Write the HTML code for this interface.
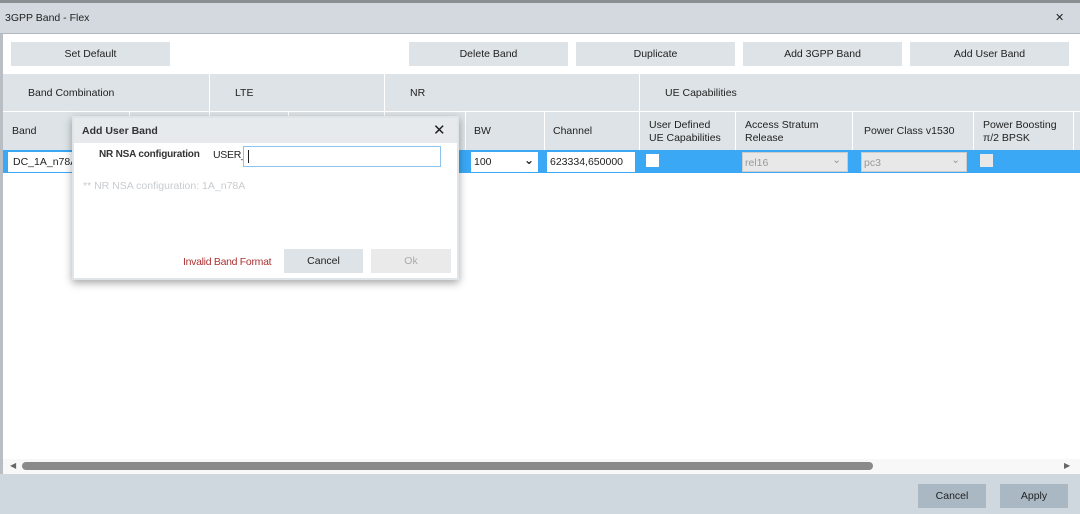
<!DOCTYPE html>
<html><head><meta charset="utf-8"><style>
*{box-sizing:border-box;margin:0;padding:0}
body{width:1080px;height:514px;overflow:hidden;background:#fff;font-family:"Liberation Sans","DejaVu Sans",sans-serif;font-size:10.5px;color:#222;position:relative}
.a{position:absolute}
.btn{position:absolute;background:#dde3e7;text-align:center;line-height:24px;font-size:10.5px;color:#222}
.vl{position:absolute;width:1px;background:#fff}
</style></head><body>
<div class="a" style="left:0;top:0;width:1080px;height:3px;background:#8a8f94"></div>
<div class="a" style="left:0;top:3px;width:1080px;height:31px;background:#d3d9de;border-bottom:1px solid #b0b8bf"></div>
<div class="a" style="left:5px;top:12px">3GPP Band - Flex</div>
<div class="a" style="left:1055px;top:11px;font-size:11px;font-weight:bold">✕</div>
<div class="a" style="left:0;top:34px;width:3px;height:440px;background:#b8bec4"></div>
<div class="btn" style="left:11px;top:42px;width:159px">Set Default</div>
<div class="btn" style="left:409px;top:42px;width:159px">Delete Band</div>
<div class="btn" style="left:576px;top:42px;width:159px">Duplicate</div>
<div class="btn" style="left:743px;top:42px;width:159px">Add 3GPP Band</div>
<div class="btn" style="left:910px;top:42px;width:159px">Add User Band</div>
<div class="a" style="left:3px;top:74px;width:1077px;height:76px;background:#dde3e7"></div>
<div class="a" style="left:3px;top:111px;width:1077px;height:1px;background:#fff"></div>
<div class="vl" style="left:209px;top:74px;height:76px"></div>
<div class="vl" style="left:384px;top:74px;height:76px"></div>
<div class="vl" style="left:639px;top:74px;height:76px"></div>
<div class="vl" style="left:129px;top:111px;height:39px"></div>
<div class="vl" style="left:288px;top:111px;height:39px"></div>
<div class="vl" style="left:465px;top:111px;height:39px"></div>
<div class="vl" style="left:544px;top:111px;height:39px"></div>
<div class="vl" style="left:735px;top:111px;height:39px"></div>
<div class="vl" style="left:852px;top:111px;height:39px"></div>
<div class="vl" style="left:973px;top:111px;height:39px"></div>
<div class="vl" style="left:1073px;top:111px;height:39px"></div>
<div class="a" style="left:28px;top:87px">Band Combination</div>
<div class="a" style="left:235px;top:87px">LTE</div>
<div class="a" style="left:410px;top:87px">NR</div>
<div class="a" style="left:665px;top:87px">UE Capabilities</div>
<div class="a" style="left:12px;top:125px">Band</div>
<div class="a" style="left:474px;top:125px">BW</div>
<div class="a" style="left:553px;top:125px">Channel</div>
<div class="a" style="left:649px;top:119px;line-height:13px">User Defined<br>UE Capabilities</div>
<div class="a" style="left:745px;top:119px;line-height:13px">Access Stratum<br>Release</div>
<div class="a" style="left:864px;top:125px">Power Class v1530</div>
<div class="a" style="left:983px;top:119px;line-height:13px">Power Boosting<br>π/2 BPSK</div>
<div class="a" style="left:3px;top:150px;width:1077px;height:23px;background:#3aa8f5"></div>
<div class="a" style="left:8px;top:152px;width:120px;height:20px;background:#fff;padding:4px 5px">DC_1A_n78A</div>
<div class="a" style="left:471px;top:152px;width:67px;height:20px;background:#fff;padding:4px 3px">100<span style="position:absolute;right:4px;top:1px;font-weight:bold;font-size:12px">⌄</span></div>
<div class="a" style="left:547px;top:152px;width:88px;height:20px;background:#fff;padding:4px 3px">623334,650000</div>
<div class="a" style="left:646px;top:154px;width:13px;height:13px;background:#fff"></div>
<div class="a" style="left:742px;top:152px;width:106px;height:20px;background:#e8e8e8;border:1px solid #ccc;padding:4px 2px;color:#999">rel16<span style="position:absolute;right:6px;top:1px">⌄</span></div>
<div class="a" style="left:861px;top:152px;width:106px;height:20px;background:#e8e8e8;border:1px solid #ccc;padding:4px 2px;color:#999">pc3<span style="position:absolute;right:6px;top:1px">⌄</span></div>
<div class="a" style="left:980px;top:154px;width:13px;height:13px;background:#e8e8e8"></div>
<!-- dialog -->
<div class="a" style="left:72px;top:116px;width:387px;height:164px;background:#fff;border:2px solid #dfe4e8;box-shadow:0 3px 8px rgba(0,0,0,.35)"></div>
<div class="a" style="left:74px;top:118px;width:383px;height:25px;background:#e6eaed"></div>
<div class="a" style="left:82px;top:125px;font-weight:bold;color:#333">Add User Band</div>
<div class="a" style="left:433px;top:121px;font-size:15px;font-weight:bold">✕</div>
<div class="a" style="left:99px;top:149px;font-weight:bold;color:#333;font-size:10px;letter-spacing:-0.2px">NR NSA configuration</div>
<div class="a" style="left:213px;top:149px;letter-spacing:-0.3px">USER_</div>
<div class="a" style="left:243px;top:146px;width:198px;height:21px;border:1px solid #8cc4ee;background:#fff"></div>
<div class="a" style="left:248px;top:150px;width:1px;height:13px;background:#222"></div>
<div class="a" style="left:83px;top:180px;color:#c8ccd0">** NR NSA configuration: 1A_n78A</div>
<div class="a" style="left:183px;top:256px;color:#a33;letter-spacing:-0.3px">Invalid Band Format</div>
<div class="btn" style="left:284px;top:249px;width:79px">Cancel</div>
<div class="btn" style="left:371px;top:249px;width:80px;background:#eaeaea;color:#aaa">Ok</div>
<!-- scrollbar -->
<div class="a" style="left:3px;top:459px;width:1077px;height:15px;background:#f8f8f8"></div>
<div class="a" style="left:22px;top:462px;width:851px;height:8px;background:#8a8a8a;border-radius:4px"></div>
<div class="a" style="left:10px;top:461px;font-size:8px;color:#666">◀</div>
<div class="a" style="left:1064px;top:461px;font-size:8px;color:#666">▶</div>
<div class="a" style="left:0;top:474px;width:1080px;height:40px;background:#cfd8df"></div>
<div class="btn" style="left:918px;top:484px;width:68px;background:#a9b8c3">Cancel</div>
<div class="btn" style="left:1000px;top:484px;width:68px;background:#a9b8c3">Apply</div>
</body></html>
